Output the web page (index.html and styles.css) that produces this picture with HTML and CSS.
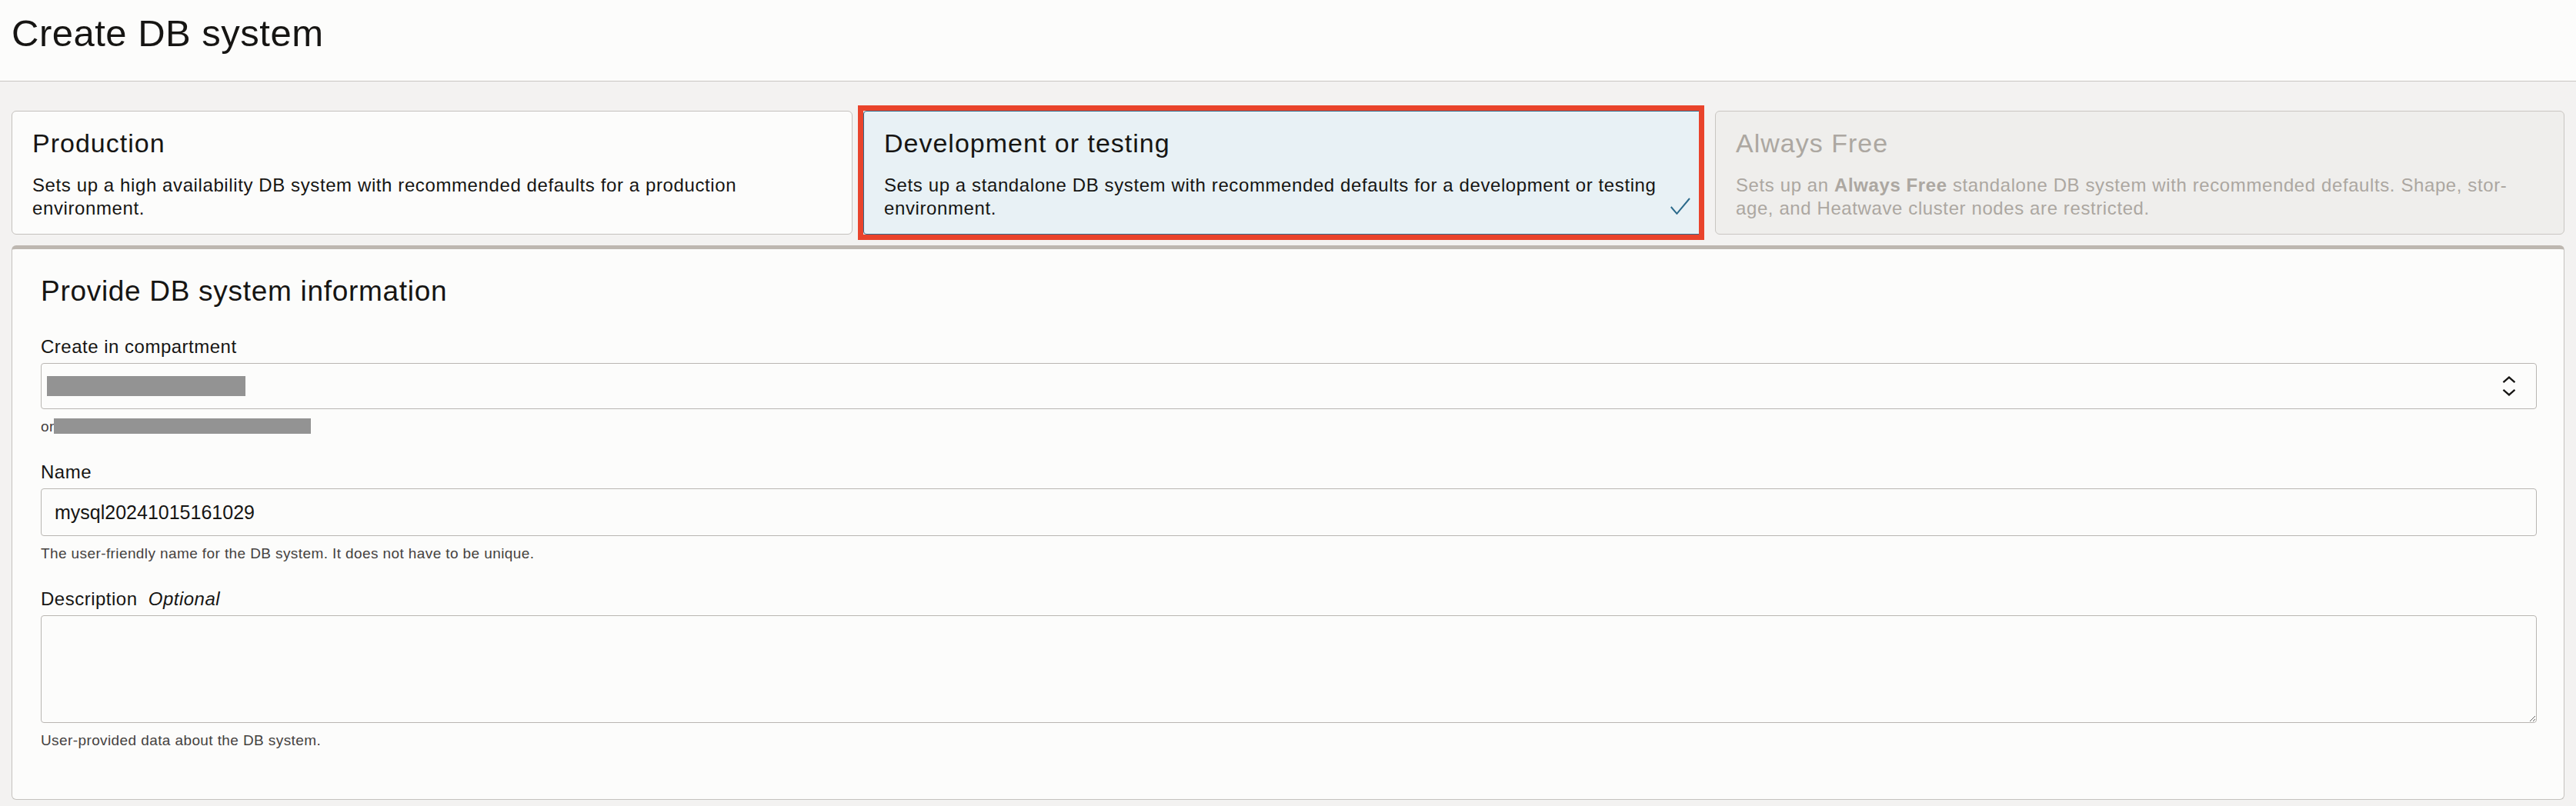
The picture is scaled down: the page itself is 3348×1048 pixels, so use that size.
FILE: index.html
```html
<!DOCTYPE html>
<html lang="en">
<head>
<meta charset="utf-8">
<title>Create DB system</title>
<link rel="stylesheet" href="styles.css">
</head>
<body>
<header class="page-header">
  <h1 class="page-title">Create DB system</h1>
</header>
<main class="page-main">
  <div class="preset-grid">
    <div class="preset-card">
      <h2 class="preset-title">Production</h2>
      <p class="preset-desc">Sets up a high availability DB system with recommended defaults for a production environment.</p>
    </div>
    <div class="preset-card is-selected">
      <h2 class="preset-title">Development or testing</h2>
      <p class="preset-desc">Sets up a standalone DB system with recommended defaults for a development or testing environment.</p>
      <svg class="preset-check" viewBox="0 0 26 22" width="26" height="22" aria-hidden="true"><polyline points="0.8,12 8.4,20.8 25,1" fill="none" stroke="#2b6a8b" stroke-width="2"/></svg>
      <span class="annotation"></span>
    </div>
    <div class="preset-card is-disabled">
      <h2 class="preset-title">Always Free</h2>
      <p class="preset-desc">Sets up an <strong>Always Free</strong> standalone DB system with recommended defaults. Shape, stor&shy;age, and Heatwave cluster nodes are restricted.</p>
    </div>
  </div>

  <section class="panel">
    <h2 class="panel-title">Provide DB system information</h2>

    <div class="field field-first">
      <label class="field-label">Create in compartment</label>
      <div class="select-box">
        <span class="redact redact-value"></span>
        <svg class="select-icon" viewBox="0 0 18 26" width="18" height="26" aria-hidden="true"><path d="M1.5 8.2 L9 1.6 L16.5 8.2" fill="none" stroke="#161513" stroke-width="2.3"/><path d="M1.5 17.8 L9 24.4 L16.5 17.8" fill="none" stroke="#161513" stroke-width="2.3"/></svg>
      </div>
      <p class="field-help">or<span class="redact redact-help"></span></p>
    </div>

    <div class="field">
      <label class="field-label" for="dbname">Name</label>
      <input class="text-input" id="dbname" type="text" value="mysql20241015161029">
      <p class="field-help">The user-friendly name for the DB system. It does not have to be unique.</p>
    </div>

    <div class="field">
      <label class="field-label" for="dbdesc">Description <em class="optional">Optional</em></label>
      <textarea class="text-area" id="dbdesc"></textarea>
      <p class="field-help">User-provided data about the DB system.</p>
    </div>
  </section>
</main>
</body>
</html>
```

FILE: styles.css
```css
* {
  box-sizing: border-box;
}

html, body {
  margin: 0;
  background: #f3f2f1;
}

body {
  font-family: "Liberation Sans", Arial, sans-serif;
  color: #161513;
}

.page-header {
  background: #fcfcfb;
  border-bottom: 1px solid #cac7c3;
  padding: 14px 15px 0;
  height: 106px;
}

.page-title {
  margin: 0;
  font-size: 49px;
  line-height: 58px;
  font-weight: 400;
  letter-spacing: 0.5px;
}

.page-main {
  padding: 38px 15px 0;
}

.preset-grid {
  display: grid;
  grid-template-columns: 1093px 1093px 1fr;
  gap: 14px;
}

.preset-card {
  position: relative;
  background: #fcfcfb;
  border: 1px solid #c4c1bd;
  border-radius: 6px;
  padding: 21px 44px 18px 26px;
}

.preset-title {
  margin: 0;
  font-size: 34px;
  line-height: 40px;
  font-weight: 400;
  letter-spacing: 1px;
}

.preset-desc {
  margin: 20px 0 0;
  font-size: 24px;
  line-height: 30px;
  letter-spacing: 0.6px;
}

.preset-card.is-selected {
  background: #e8f1f5;
  border-color: #2f6a8b;
  border-radius: 4px;
}

.preset-check {
  position: absolute;
  right: 17px;
  bottom: 25px;
  display: block;
}

.annotation {
  position: absolute;
  top: -8px;
  left: -8px;
  right: -1px;
  bottom: -8px;
  border: 7px solid #e9432b;
  pointer-events: none;
}

.preset-card.is-disabled {
  background: #efeeec;
  border-color: #c9c6c2;
  color: #aca7a1;
}

.preset-card.is-disabled strong {
  font-weight: 700;
}

.panel {
  margin-top: 14px;
  background: #fcfcfb;
  border: 1px solid #c5c2be;
  border-top: 5px solid #bdb7b0;
  border-radius: 6px;
  padding: 33px 35px 64px 37px;
}

.panel-title {
  margin: 0;
  font-size: 37px;
  line-height: 44px;
  font-weight: 400;
  letter-spacing: 0.7px;
}

.field {
  margin-top: 32px;
}

.field-first {
  margin-top: 35px;
}

.field-label {
  display: block;
  font-size: 24px;
  line-height: 30px;
  letter-spacing: 0.5px;
}

.optional {
  margin-left: 7px;
  font-style: italic;
}

.select-box {
  margin-top: 6px;
  height: 60px;
  display: flex;
  align-items: center;
  justify-content: space-between;
  padding: 0 26px 0 7px;
  border: 1px solid #b9b6b2;
  border-radius: 4px;
  background: #fcfcfb;
}

.select-icon {
  display: block;
}

.redact {
  display: inline-block;
  background: #939393;
}

.redact-value {
  width: 258px;
  height: 26px;
}

.redact-help {
  width: 334px;
  height: 20px;
  vertical-align: -3px;
  margin-left: -1px;
}

.text-input {
  display: block;
  width: 100%;
  margin-top: 6px;
  height: 62px;
  padding: 0 17px;
  border: 1px solid #b9b6b2;
  border-radius: 4px;
  background: #fcfcfb;
  font-family: "Liberation Sans", Arial, sans-serif;
  font-size: 25px;
  color: #161513;
  outline: none;
}

.text-area {
  display: block;
  width: 100%;
  margin-top: 6px;
  height: 140px;
  border: 1px solid #b9b6b2;
  border-radius: 4px;
  background: #fcfcfb;
  font-family: "Liberation Sans", Arial, sans-serif;
  font-size: 25px;
  outline: none;
}

.field-help {
  margin: 11px 0 0;
  font-size: 19px;
  line-height: 24px;
  letter-spacing: 0.4px;
  color: #45423f;
}
```
